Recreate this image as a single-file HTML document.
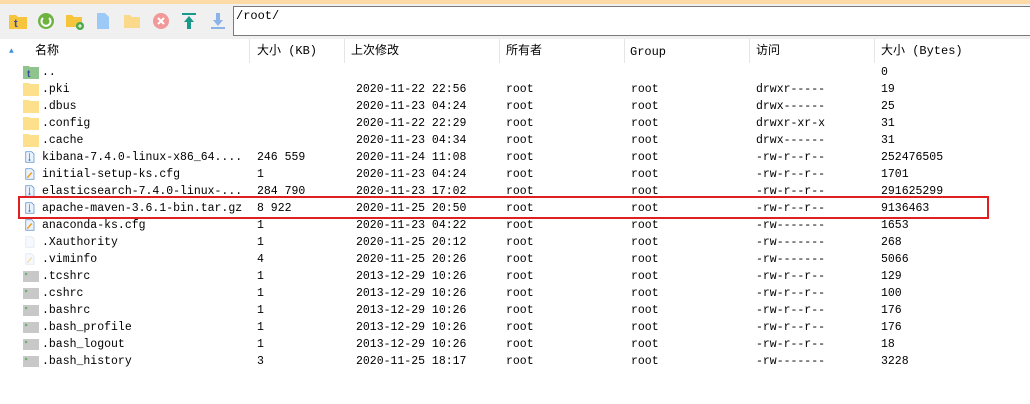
<!DOCTYPE html>
<html><head><meta charset="utf-8"><style>
*{margin:0;padding:0;box-sizing:border-box}
body{width:1030px;height:404px;background:#fff;position:relative;overflow:hidden;font-family:"Liberation Mono","Noto Sans CJK SC",monospace;font-size:11.5px;color:#000}
.top{position:absolute;left:0;top:0;width:1030px;height:4px;background:#fcdba6}
.tb{position:absolute;left:0;top:4px;width:1030px;height:35px;background:#f0f0f0}
.path{position:absolute;left:233px;top:6px;width:800px;height:30px;background:#fff;border:1px solid #7a7a7a;border-right:none;padding:2px 2px;font-size:12px}
.ic{position:absolute;top:12px}
.hd{position:absolute;top:39px;left:0;width:1030px;height:23px}
.hd span{position:absolute;top:3px;font-size:12px;line-height:18px;height:18px}
.sep{position:absolute;top:39px;width:1px;height:24px;background:#e5e5e5}
.r{position:absolute;left:0;width:1030px;height:17px}
.r span{position:absolute;top:2px;white-space:pre;line-height:14px}
.fi{position:absolute;left:23px;top:1px;width:16px;height:14px}
</style></head><body>
<div class="top"></div>
<div class="tb"></div>
<svg class="ic" style="left:8px" width="20" height="18"><path d="M1 3h7l2 2h9v12H1z" fill="#f7c53d"/><text x="6" y="15" font-size="11" font-weight="bold" fill="#3a4ba0" font-family="Liberation Sans">t</text></svg>
<svg class="ic" style="left:37px" width="18" height="18"><circle cx="9" cy="9" r="8" fill="#6db33f"/><path d="M6 6a4.5 4.5 0 1 0 6 0" stroke="#fff" stroke-width="2" fill="none"/></svg>
<svg class="ic" style="left:65px" width="20" height="18"><path d="M1 3h6l2 2h8v10H1z" fill="#f7c53d"/><circle cx="15" cy="14" r="4" fill="#4aa84a"/><path d="M15 12v4M13 14h4" stroke="#fff"/></svg>
<svg class="ic" style="left:96px" width="14" height="18"><path d="M1 1h8l4 4v12H1z" fill="#9cc9f5"/></svg>
<svg class="ic" style="left:123px" width="18" height="18"><path d="M1 3h6l2 2h8v11H1z" fill="#fbd98a"/></svg>
<svg class="ic" style="left:152px" width="18" height="18"><circle cx="9" cy="9" r="8" fill="#f19898"/><path d="M6 6l6 6M12 6l-6 6" stroke="#fff" stroke-width="2"/></svg>
<svg class="ic" style="left:181px" width="16" height="18"><path d="M1 2h14" stroke="#1a9a8a" stroke-width="2"/><path d="M8 4l5 6H10v7H6v-7H3z" fill="#1a9a8a"/></svg>
<svg class="ic" style="left:210px" width="16" height="18"><path d="M6 1h4v7h3l-5 6-5-6h3z" fill="#8ab4e8"/><path d="M1 16h14" stroke="#8ab4e8" stroke-width="2"/></svg>
<div class="path">/root/</div>
<div class="hd">
<span style="left:9px;top:4px;font-size:8px;color:#3b8fe0">▲</span>
<span style="left:35px">名称</span><span style="left:257px">大小 (KB)</span><span style="left:351px">上次修改</span><span style="left:506px">所有者</span><span style="left:630px;top:4px">Group</span><span style="left:756px">访问</span><span style="left:881px">大小 (Bytes)</span>
</div>
<div class="sep" style="left:249px"></div><div class="sep" style="left:344px"></div><div class="sep" style="left:499px"></div><div class="sep" style="left:624px"></div><div class="sep" style="left:749px"></div><div class="sep" style="left:874px"></div>
<div id="rows"></div>
<div style="position:absolute;left:18px;top:196px;width:971px;height:23px;border:2px solid #e02020"></div>
<script>
var F={up:'<svg class="fi" viewBox="0 0 16 14"><path d="M0 1h6l1 1h9v12H0z" fill="#8fc48f"/><text x="4" y="12" font-size="10" font-weight="bold" fill="#3a4ba0" font-family="Liberation Sans">t</text></svg>',
d:'<svg class="fi" viewBox="0 0 16 14"><path d="M0 1h6l1 1h9v12H0z" fill="#fde08c"/></svg>',
a:'<svg class="fi" viewBox="0 0 16 14" style="left:25px;width:12px"><path d="M1 0h8l3 3v11H1z" fill="#eaf3fc" stroke="#5a8cc8"/><path d="M6 2v9" stroke="#4a7fc8"/><circle cx="6" cy="11" r="1.3" fill="#4a7fc8"/></svg>',
e:'<svg class="fi" viewBox="0 0 16 14" style="left:25px;width:12px"><path d="M1 0h8l3 3v11H1z" fill="#eaf3fc" stroke="#5a8cc8"/><path d="M3 12l6-7" stroke="#f0a020" stroke-width="2"/></svg>',
b:'<svg class="fi" viewBox="0 0 16 14" style="left:25px;width:12px"><path d="M1 0h8l3 3v11H1z" fill="#f6f9fd" stroke="#dde6f0"/></svg>',
v:'<svg class="fi" viewBox="0 0 16 14" style="left:25px;width:12px"><path d="M1 0h8l3 3v11H1z" fill="#f6f9fd" stroke="#dde6f0"/><path d="M3 12l6-7" stroke="#f6dcb0" stroke-width="2"/></svg>',
s:'<svg class="fi" viewBox="0 0 16 14"><rect x="0" y="2" width="16" height="11" fill="#c8c8c8"/><path d="M2 4l2 1-2 1" stroke="#4a4" fill="none" stroke-width=".8"/></svg>'};
var R=[['up','..','','','','','','0'],
['d','.pki','','2020-11-22 22:56','root','root','drwxr-----','19'],
['d','.dbus','','2020-11-23 04:24','root','root','drwx------','25'],
['d','.config','','2020-11-22 22:29','root','root','drwxr-xr-x','31'],
['d','.cache','','2020-11-23 04:34','root','root','drwx------','31'],
['a','kibana-7.4.0-linux-x86_64....','246 559','2020-11-24 11:08','root','root','-rw-r--r--','252476505'],
['e','initial-setup-ks.cfg','1','2020-11-23 04:24','root','root','-rw-r--r--','1701'],
['a','elasticsearch-7.4.0-linux-...','284 790','2020-11-23 17:02','root','root','-rw-r--r--','291625299'],
['a','apache-maven-3.6.1-bin.tar.gz','8 922','2020-11-25 20:50','root','root','-rw-r--r--','9136463'],
['e','anaconda-ks.cfg','1','2020-11-23 04:22','root','root','-rw-------','1653'],
['b','.Xauthority','1','2020-11-25 20:12','root','root','-rw-------','268'],
['v','.viminfo','4','2020-11-25 20:26','root','root','-rw-------','5066'],
['s','.tcshrc','1','2013-12-29 10:26','root','root','-rw-r--r--','129'],
['s','.cshrc','1','2013-12-29 10:26','root','root','-rw-r--r--','100'],
['s','.bashrc','1','2013-12-29 10:26','root','root','-rw-r--r--','176'],
['s','.bash_profile','1','2013-12-29 10:26','root','root','-rw-r--r--','176'],
['s','.bash_logout','1','2013-12-29 10:26','root','root','-rw-r--r--','18'],
['s','.bash_history','3','2020-11-25 18:17','root','root','-rw-------','3228']];
var X=[42,257,356,506,631,756,881],h='';
R.forEach(function(r,i){h+='<div class="r" style="top:'+(64+17*i)+'px">'+F[r[0]];for(var j=1;j<8;j++)if(r[j])h+='<span style="left:'+X[j-1]+'px">'+r[j]+'</span>';h+='</div>'});
document.getElementById('rows').innerHTML=h;
</script>
</body></html>
